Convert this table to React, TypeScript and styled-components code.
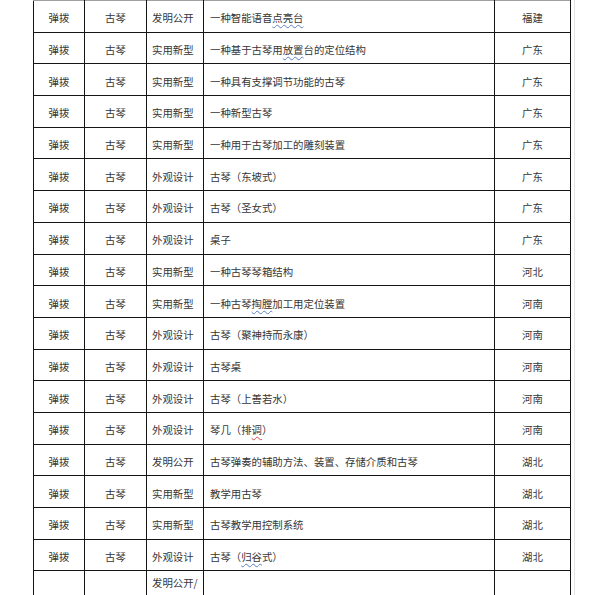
import styled, { createGlobalStyle } from 'styled-components';

const GlobalStyle = createGlobalStyle`
  html, body {
    margin: 0;
    padding: 0;
    background: #ffffff;
    overflow: hidden;
  }
`;

type Row = {
  kind: string;
  title: React.ReactNode;
  region: string;
};

const Page = styled.div`
  width: 575px;
  height: 595px;
  box-sizing: border-box;
  padding-left: 33px;
  border-right: 1px solid #e2e2e2;
  font-family: "Noto Sans CJK SC", "Noto Sans", sans-serif;
  font-size: 10.4px;
  color: #363636;
  overflow: hidden;
`;

const Table = styled.table`
  border-collapse: collapse;
  table-layout: fixed;
  width: 537px;
  border-top: 1px solid #a0a0a0;

  td {
    border: 1px solid #151515;
    height: 26.7px;
    padding: 0;
    line-height: 14px;
    white-space: nowrap;
    overflow: hidden;
  }

  tr:first-child td {
    border-top: 1px solid #a0a0a0;
  }
`;

const Cell = styled.td<{ $align?: 'center' | 'left'; $pad?: number }>`
  text-align: ${(p) => p.$align ?? 'center'};
  padding-left: ${(p) => p.$pad ?? 0}px !important;
  padding-top: 4px !important;
`;

const TopCell = styled.td`
  vertical-align: top;
  padding: 5px 0 0 5px !important;
  height: 60px !important;
`;

const Squiggle = styled.span<{ $tone?: 'blue' | 'red' }>`
  text-decoration-line: underline;
  text-decoration-style: wavy;
  text-decoration-color: ${(p) => (p.$tone === 'red' ? '#d24a4a' : '#5b7fc9')};
  text-decoration-thickness: 1px;
  text-underline-offset: 2px;
`;

const rows: Row[] = [
  { kind: '发明公开', title: <>一种智能语音<Squiggle>点亮台</Squiggle></>, region: '福建' },
  { kind: '实用新型', title: <>一种基于古琴用<Squiggle>放置</Squiggle>台的定位结构</>, region: '广东' },
  { kind: '实用新型', title: '一种具有支撑调节功能的古琴', region: '广东' },
  { kind: '实用新型', title: '一种新型古琴', region: '广东' },
  { kind: '实用新型', title: '一种用于古琴加工的雕刻装置', region: '广东' },
  { kind: '外观设计', title: '古琴（东坡式）', region: '广东' },
  { kind: '外观设计', title: '古琴（圣女式）', region: '广东' },
  { kind: '外观设计', title: '桌子', region: '广东' },
  { kind: '实用新型', title: '一种古琴琴箱结构', region: '河北' },
  { kind: '实用新型', title: <>一种古琴<Squiggle>掏膛</Squiggle>加工用定位装置</>, region: '河南' },
  { kind: '外观设计', title: '古琴（聚神持而永康）', region: '河南' },
  { kind: '外观设计', title: '古琴桌', region: '河南' },
  { kind: '外观设计', title: '古琴（上善若水）', region: '河南' },
  { kind: '外观设计', title: <>琴几（排<Squiggle $tone="red">调</Squiggle>）</>, region: '河南' },
  { kind: '发明公开', title: '古琴弹奏的辅助方法、装置、存储介质和古琴', region: '湖北' },
  { kind: '实用新型', title: '教学用古琴', region: '湖北' },
  { kind: '实用新型', title: '古琴教学用控制系统', region: '湖北' },
  { kind: '外观设计', title: <>古琴（<Squiggle>归谷</Squiggle>式）</>, region: '湖北' },
];

export default function App() {
  return (
    <Page>
      <GlobalStyle />
      <Table>
        <colgroup>
          <col style={{ width: 51 }} />
          <col style={{ width: 62 }} />
          <col style={{ width: 57 }} />
          <col style={{ width: 291 }} />
          <col style={{ width: 76 }} />
        </colgroup>
        <tbody>
          {rows.map((r, i) => (
            <tr key={i}>
              <Cell>弹拨</Cell>
              <Cell>古琴</Cell>
              <Cell $align="left" $pad={5}>{r.kind}</Cell>
              <Cell $align="left" $pad={6}>{r.title}</Cell>
              <Cell>{r.region}</Cell>
            </tr>
          ))}
          <tr>
            <TopCell />
            <TopCell />
            <TopCell>发明公开/</TopCell>
            <TopCell />
            <TopCell />
          </tr>
        </tbody>
      </Table>
    </Page>
  );
}
